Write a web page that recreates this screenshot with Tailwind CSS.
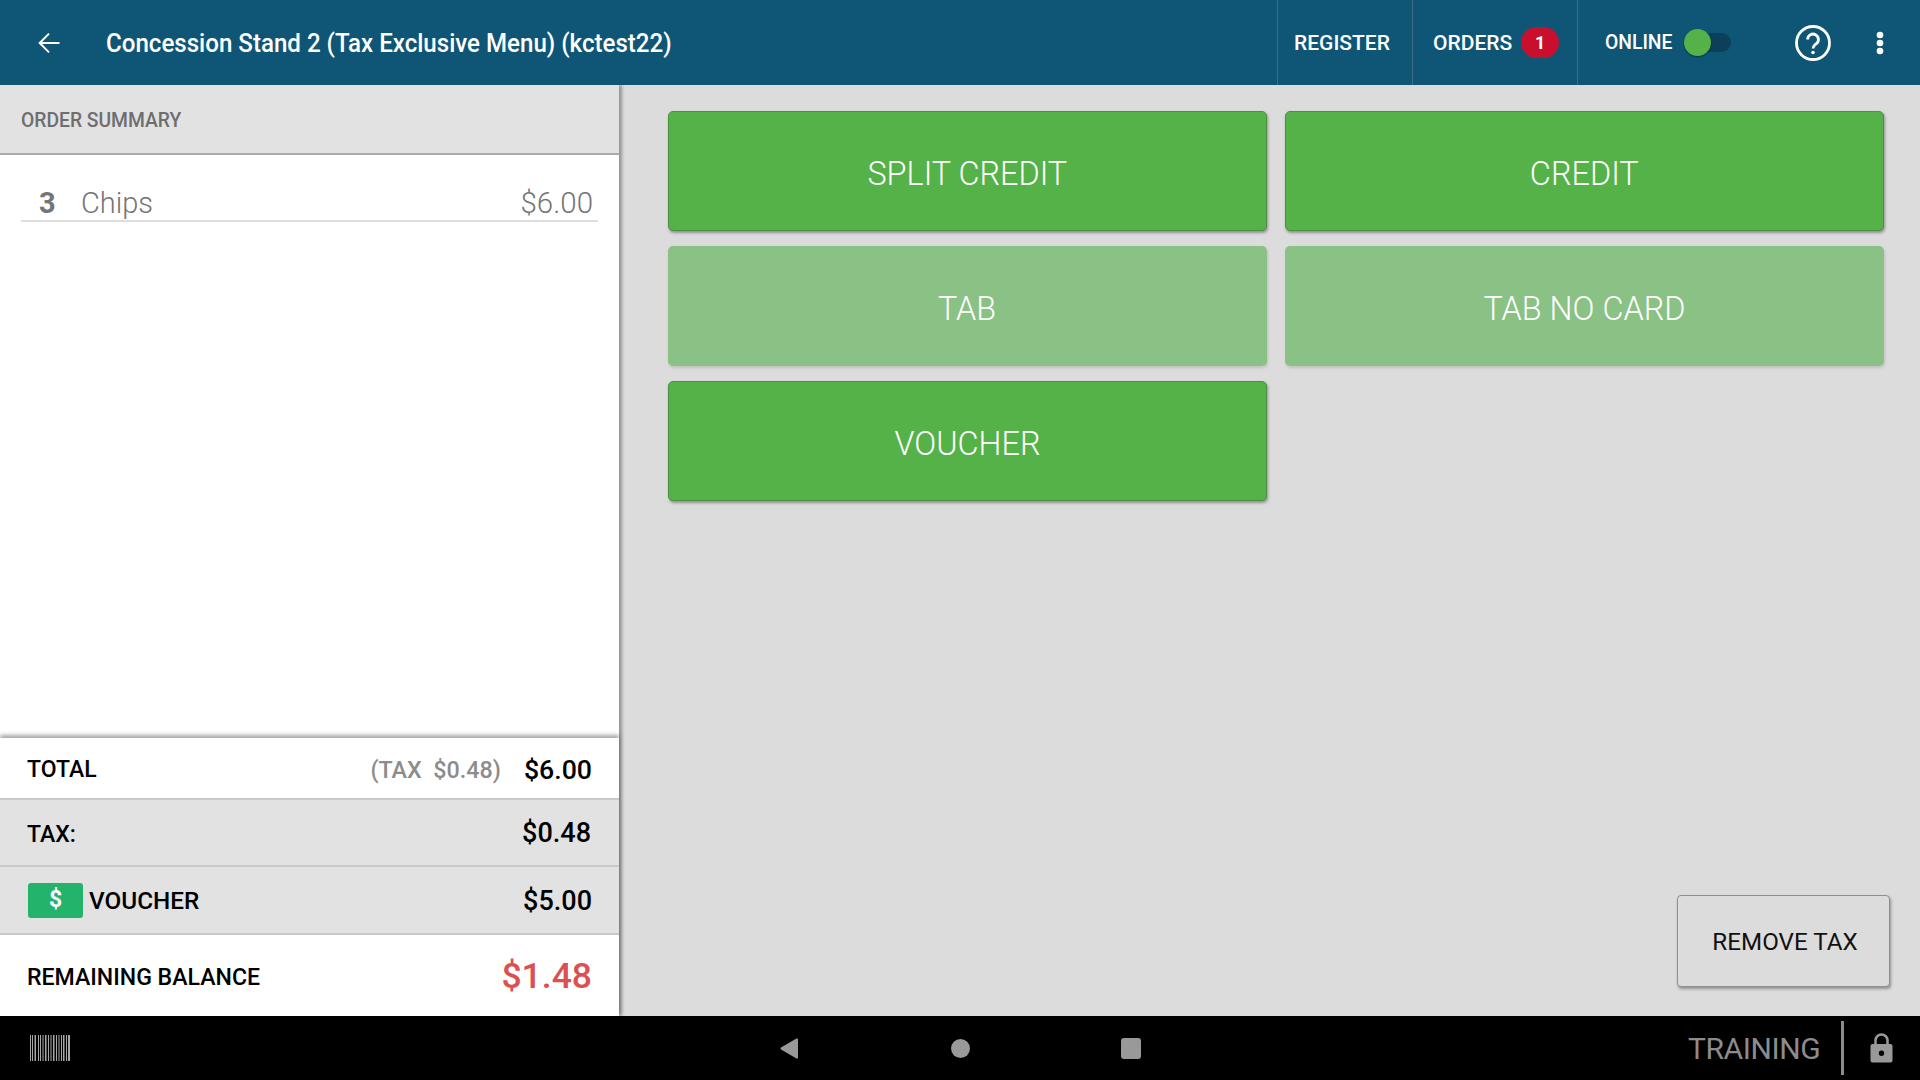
<!DOCTYPE html>
<html>
<head>
<meta charset="utf-8">
<script src="https://cdn.jsdelivr.net/npm/@tailwindcss/browser@4"></script>
</head>
<body class="m-0 overflow-hidden">
<div class="w-[1920px] h-[1080px] flex flex-col font-['Roboto',sans-serif] bg-[#dcdcdc]">
  <header class="h-[85px] shrink-0 flex items-stretch bg-[#0f5676] text-white relative z-20">
    <div class="w-[106px] shrink-0 flex items-center pl-[35px]">
      <svg class="w-[28px] h-[28px]" viewBox="0 0 24 24" fill="none" stroke="#fff" stroke-width="1.7"><path d="M21 12H4.500M12 4l-8 8 8 8"/></svg>
    </div>
    <div class="flex-1 flex items-center pt-[2px] text-[25.5px] font-medium whitespace-nowrap"><span class="inline-block origin-left scale-x-[.945]">Concession Stand 2 (Tax Exclusive Menu) (kctest22)</span></div>
    <div class="w-[135px] border-l border-[#3f6c84] flex items-center pl-[16px] pt-[3px] text-[21px] font-medium">REGISTER</div>
    <div class="w-[165px] border-l border-[#3f6c84] flex items-center pl-[20px] text-[21px] font-medium">
      <span class="pt-[3px]">ORDERS</span>
      <span class="ml-[9px] w-[38px] h-[31px] rounded-full bg-[#c8102e] flex items-center justify-center text-[18px] font-bold">1</span>
    </div>
    <div class="w-[343px] border-l border-[#3f6c84] flex items-center pl-[27px] relative">
      <span class="text-[19.3px] font-medium pt-[2px]">ONLINE</span>
      <span class="ml-[12px] w-[47px] h-[19px] rounded-full bg-[#0c4059] relative">
        <span class="absolute left-0 top-[-4px] w-[27px] h-[27px] rounded-full bg-[#55b249] shadow-[0_1px_2px_rgba(0,0,0,.4)]"></span>
      </span>
      <svg class="ml-[64px] w-[36px] h-[36px]" viewBox="0 0 36 36" fill="none">
        <circle cx="18" cy="18" r="16.500" stroke="#fff" stroke-width="2.800"/>
        <path d="M12.600 14.400a5.400 5.400 0 1 1 8.600 4.400c-2 1.500-3.200 2.300-3.200 4.700" stroke="#fff" stroke-width="2.800"/>
        <circle cx="18" cy="27.500" r="1.800" fill="#fff"/>
      </svg>
      <svg class="ml-[45px] w-[8px] h-[24px]" viewBox="0 0 8 24" fill="#fff">
        <circle cx="4" cy="4" r="3.300"/><circle cx="4" cy="12" r="3.300"/><circle cx="4" cy="20" r="3.300"/>
      </svg>
    </div>
  </header>

  <main class="flex-1 flex min-h-0">
    <aside class="w-[619px] shrink-0 flex flex-col bg-white shadow-[3px_0_3px_rgba(0,0,0,.32)] relative z-10">
      <div class="h-[70px] shrink-0 pt-[4px] bg-[#e2e2e2] border-b-2 border-[#ababab] flex items-center pl-[21px] text-[19.3px] font-medium text-[#6e6e6e]">ORDER SUMMARY</div>
      <div class="flex-1 px-[21px] pt-[16px]">
        <div class="h-[51px] pt-[16px] border-b-2 border-[#dedede] flex items-center text-[29px] font-light text-[#757575]">
          <span class="w-[60px] pl-[18px] font-bold">3</span>
          <span class="flex-1">Chips</span>
          <span class="pr-[5px] text-[29.5px]">$6.00</span>
        </div>
      </div>
      <div class="shrink-0 shadow-[0_-3px_4px_rgba(0,0,0,.35)] relative">
        <div class="h-[62px] border-b-2 border-[#c9c9c9] flex items-center px-[27px] bg-white text-black">
          <span class="flex-1 text-[23px] font-medium pt-[5px]">TOTAL</span>
          <span class="text-[23.300px] font-medium text-[#8c8c8c] mr-[23px] whitespace-pre pt-[4px]">(TAX  $0.48)</span>
          <span class="text-[26.700px] font-medium pt-[4px]">$6.00</span>
        </div>
        <div class="h-[67px] border-b-2 border-[#c9c9c9] flex items-center pl-[27px] pr-[28px] bg-[#e2e2e2] text-black">
          <span class="flex-1 text-[23px] font-medium pt-[6px]">TAX:</span>
          <span class="text-[27px] font-medium pt-[2px]">$0.48</span>
        </div>
        <div class="h-[68px] border-b-2 border-[#c9c9c9] flex items-center pl-[28px] pr-[27px] bg-[#e2e2e2] text-black">
          <span class="w-[55px] h-[35px] rounded-[3px] bg-[#24b36b] text-white flex items-center justify-center text-[23px] font-bold">$</span>
          <span class="flex-1 ml-[6px] text-[24.300px] font-medium pt-[3px]">VOUCHER</span>
          <span class="text-[27px] font-medium pt-[3px]">$5.00</span>
        </div>
        <div class="h-[81px] flex items-center pl-[27px] pr-[27px] bg-white text-black">
          <span class="flex-1 text-[23.100px] font-medium pt-[5px]">REMAINING BALANCE</span>
          <span class="text-[35.500px] font-medium text-[#db5050] pt-[2px]">$1.48</span>
        </div>
      </div>
    </aside>

    <section class="flex-1 flex flex-col min-w-0 pt-[26px] pl-[49px]">
      <div class="grid grid-cols-[599px_599px] gap-x-[18px] gap-y-[15px]">
        <button class="h-[120px] pt-[6px] rounded-[5px] border border-[#4a9141] bg-[#55b249] text-white text-[33.500px] font-light shadow-[1px_2px_3px_rgba(0,0,0,.35)]"><span class="inline-block scale-x-[.967]">SPLIT CREDIT</span></button>
        <button class="h-[120px] pt-[6px] rounded-[5px] border border-[#4a9141] bg-[#55b249] text-white text-[33.500px] font-light shadow-[1px_2px_3px_rgba(0,0,0,.35)]"><span class="inline-block scale-x-[.967]">CREDIT</span></button>
        <button class="h-[120px] pt-[6px] rounded-[5px] bg-[#8ac184] text-white text-[33.500px] font-light shadow-[1px_2px_3px_rgba(0,0,0,.12)]"><span class="inline-block scale-x-[.967]">TAB</span></button>
        <button class="h-[120px] pt-[6px] rounded-[5px] bg-[#8ac184] text-white text-[33.500px] font-light shadow-[1px_2px_3px_rgba(0,0,0,.12)]"><span class="inline-block scale-x-[.967]">TAB NO CARD</span></button>
        <button class="h-[120px] pt-[6px] rounded-[5px] border border-[#4a9141] bg-[#55b249] text-white text-[33.500px] font-light shadow-[1px_2px_3px_rgba(0,0,0,.35)]"><span class="inline-block scale-x-[.967]">VOUCHER</span></button>
      </div>
      <button class="mt-auto mb-[29px] mr-[30px] self-end w-[213px] h-[92px] pl-[3px] pt-[2px] rounded-[4px] border border-[#8f8f8f] bg-[#dcdcdc] text-[#111] text-[24.200px] shadow-[1px_2px_3px_rgba(0,0,0,.35)]">REMOVE TAX</button>
    </section>
  </main>

  <footer class="h-[64px] shrink-0 bg-black flex items-center relative z-20 text-[#999]">
    <div class="w-[780px] pl-[30px] shrink-0">
      <svg class="w-[40px] h-[26px] block" viewBox="0 0 40 26" fill="#a8a8a8">
        <path d="M0 0h1v26H0zM2 0h1v26H2zM4.500 0h1.500v26H4.500zM8 0h1v26H8zM10 0h1v26h-1zM12.500 0h1v26h-1zM15 0h1.500v26H15zM18 0h1v26h-1zM20.500 0h1v26h-1zM23 0h1.500v26H23zM26 0h1v26h-1zM28.500 0h1v26h-1zM31 0h1v26h-1zM33 0h1.500v26H33zM36 0h1v26h-1zM38 0h2v26h-2z"/>
      </svg>
    </div>
    <svg class="w-[18px] h-[21px] shrink-0" viewBox="0 0 18 21" fill="#999"><path d="M16.500 0.500Q18 0 18 1.500V19.500Q18 21 16.500 20.500L1 11.500Q0 10.500 1 9.500z"/></svg>
    <span class="ml-[153px] w-[19px] h-[19px] rounded-full bg-[#999] shrink-0"></span>
    <span class="ml-[151px] w-[20px] h-[21px] rounded-[3px] bg-[#999] shrink-0"></span>
    <span class="ml-[547px] text-[30px] tracking-[-0.4px] text-[#8c8c8c] w-[153px] shrink-0">TRAINING</span>
    <span class="w-[3px] h-[54px] bg-[#8c8c8c] shrink-0"></span>
    <svg class="ml-[26px] w-[23px] h-[30px] shrink-0" viewBox="0 0 23 30" fill="none">
      <path d="M5.500 12V7.500a6 6 0 0 1 12 0V12" stroke="#999" stroke-width="2.500"/>
      <path fill-rule="evenodd" d="M2.500 11h18a2 2 0 0 1 2 2v14.500a2 2 0 0 1-2 2h-18a2 2 0 0 1-2-2V13a2 2 0 0 1 2-2zM11.500 17.500a2.700 2.700 0 1 0 0 5.400 2.700 2.700 0 0 0 0-5.400z" fill="#999"/>
    </svg>
  </footer>
</div>
</body>
</html>
